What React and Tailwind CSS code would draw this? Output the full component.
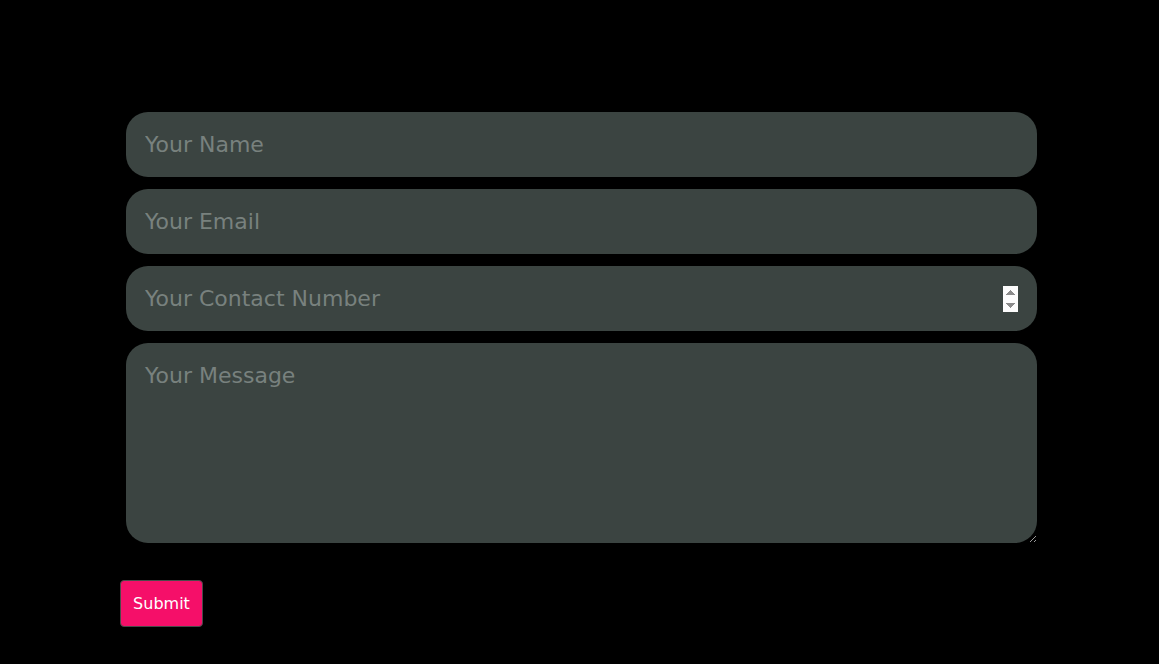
export default function App() {
  const field =
    'w-full h-[65px] rounded-[22px] bg-[#3b4441] px-[19px] text-[22px] text-[#dfe3e1] placeholder:text-[#78817e] outline-none border-0'

  return (
    <div className="min-h-[664px] bg-black font-['DejaVu_Sans',sans-serif]">
      <form className="pl-[120px] pr-[122px] pt-[112px]" onSubmit={(e) => e.preventDefault()}>
        <div className="flex flex-col gap-3 pl-[6px]">
          <input type="text" placeholder="Your Name" className={field} />
          <input type="email" placeholder="Your Email" className={field} />
          <input
            type="number"
            placeholder="Your Contact Number"
            className={`${field} [&::-webkit-inner-spin-button]:opacity-100 [&::-webkit-inner-spin-button]:h-[26px] [&::-webkit-inner-spin-button]:w-[19px]`}
          />
          <textarea
            placeholder="Your Message"
            className="w-full h-[200px] rounded-[22px] bg-[#3b4441] px-[19px] pt-[16px] text-[22px] text-[#dfe3e1] placeholder:text-[#78817e] outline-none border-0"
          />
        </div>
        <button
          type="submit"
          className="mt-[37px] h-[47px] w-[83px] rounded-[4px] border border-[#4a4a4a] bg-[#f50f69] text-[16px] text-white"
        >
          Submit
        </button>
      </form>
    </div>
  )
}
